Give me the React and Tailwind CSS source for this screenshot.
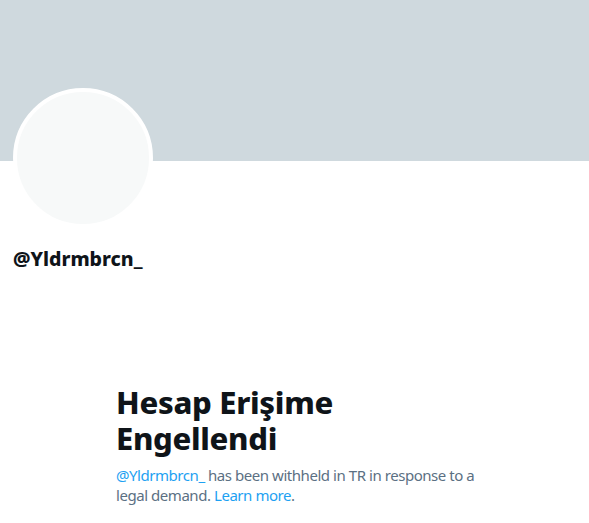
export default function App() {
  return (
    <div className="w-[589px] h-[523px] bg-white overflow-hidden" style={{ fontFamily: '"Noto Sans", "Open Sans", sans-serif' }}>
      <div className="h-[161px] bg-[#cfd9de]" />
      <div className="px-[13px]">
        <div className="-mt-[73px] w-[140px] h-[140px] rounded-full bg-[#f7f9f9] border-[4px] border-white" />
        <div className="mt-[19px] text-[19.5px] leading-[24px] font-extrabold text-[#0f1419]">@Yldrmbrcn_</div>
      </div>
      <div className="ml-[116px] mt-[113px] w-[372px]">
        <div className="text-[31px] leading-[36px] font-extrabold tracking-[-0.3px] text-[#0f1419]">Hesap Erişime Engellendi</div>
        <div className="mt-[9px] text-[15px] leading-[20px] tracking-[-0.45px] text-[#5b7083]">
          <span className="text-[#1da1f2]">@Yldrmbrcn_</span> has been withheld in TR in response to a legal demand.{' '}
          <span className="text-[#1da1f2]">Learn more</span>.
        </div>
      </div>
    </div>
  );
}
